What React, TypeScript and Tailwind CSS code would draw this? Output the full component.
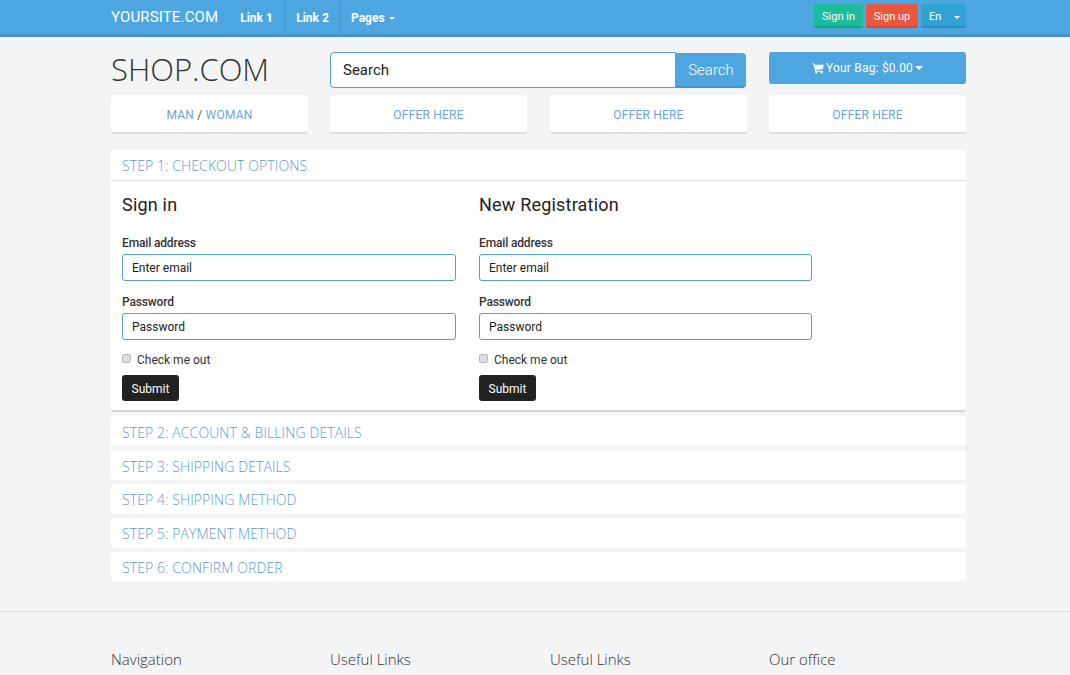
import React from "react";

const roboto = "font-['Roboto','Liberation_Sans',sans-serif]";
const openSans = "font-['Open_Sans','Liberation_Sans',sans-serif]";

function Caret({ className }: { className?: string }) {
  return <span className={`inline-block w-0 h-0 border-x-[3px] border-x-transparent border-t-[3px] border-t-current ${className ?? ""}`} />;
}

function SignForm({ title, className }: { title: string; className: string }) {
  return (
    <div className={`${className} flex flex-col`}>
      <h3 className="text-[18px] leading-[20px] mt-[14px] text-[#222] tracking-[0.2px]">{title}</h3>
      <label className="mt-[20px] text-[12px] leading-[17px] font-medium text-[#333] tracking-[-0.15px]">Email address</label>
      <div className="mt-[2px] h-[27px] border border-[#5a9fc4] rounded-[3px] bg-white px-[9px] text-[12px] leading-[26px] text-[#222]">Enter email</div>
      <label className="mt-[13px] text-[12px] leading-[17px] font-medium text-[#333] tracking-[-0.15px]">Password</label>
      <div className="mt-[2px] h-[27px] border border-[#5a9fc4] rounded-[3px] bg-white px-[9px] text-[12px] leading-[26px] text-[#222]">Password</div>
      <div className="mt-[11px] h-[17px] flex items-center text-[12px] text-[#333]">
        <span className="w-[9px] h-[9px] mb-[2px] bg-[#ddd] border border-[#bbb] rounded-[2px] mr-[6px]" />
        Check me out
      </div>
      <button className="mt-[7px] pt-[1px] self-start w-[57px] h-[26px] bg-[#222] text-white text-[12px] rounded-[3px]">Submit</button>
    </div>
  );
}

const offers = ["OFFER HERE", "OFFER HERE", "OFFER HERE"];
const steps = [
  ["STEP 2: ACCOUNT & BILLING DETAILS", "mt-[4px] h-[30px] leading-[33px]"],
  ["STEP 3: SHIPPING DETAILS", "mt-[4px] h-[30px] leading-[33px]"],
  ["STEP 4: SHIPPING METHOD", "mt-[4px] h-[30px] leading-[31px]"],
  ["STEP 5: PAYMENT METHOD", "mt-[4px] h-[30px] leading-[31px]"],
  ["STEP 6: CONFIRM ORDER", "mt-[4px] h-[29px] leading-[31px]"],
];

export default function App() {
  return (
    <div className={`h-[675px] overflow-hidden bg-[#f3f4f6] ${roboto}`}>
      <header className="h-[37px] bg-[#4ea6e0] border-b-[3px] border-[#4893c5]">
        <div className="w-[855px] ml-[111px] h-[34px] flex items-center">
          <span className="text-[15px] text-white w-[119px] tracking-[0.15px] mt-[1px]">YOURSITE.COM</span>
          <nav className="flex h-full text-[12px] font-bold text-white">
            <a className="w-[56px] pt-[2px] pr-[2px] flex items-center justify-center border-r border-[#4795ca]">Link 1</a>
            <a className="w-[55px] pt-[2px] pr-[1px] flex items-center justify-center border-r border-[#4795ca]">Link 2</a>
            <a className="pl-[10px] pt-[2px] flex items-center gap-[4px]">Pages <Caret /></a>
          </nav>
          <div className="ml-auto flex gap-[3px] text-[11px] text-white self-start mt-[4px]">
            <span className="w-[49px] h-[24px] bg-[#1abc9c] border-b-[2px] border-[#16a085] rounded-[2px] flex items-center justify-center pt-[4px]">Sign in</span>
            <span className="w-[52px] h-[24px] bg-[#e9573f] border-b-[2px] border-[#d14b36] rounded-[2px] flex items-center justify-center pt-[4px]">Sign up</span>
            <span className="w-[45px] h-[24px] bg-[#31a3d3] border-b-[2px] border-[#2a8fba] rounded-[2px] flex items-center pl-[8px] justify-between pr-[6px] pt-[4px]">En <Caret /></span>
          </div>
        </div>
      </header>

      <main className="w-[855px] ml-[111px]">
        <div className="flex mt-[15px]">
          <div className={`${openSans} font-light w-[219px] text-[31px] leading-[34px] text-[#333] h-[36px]`}>SHOP.COM</div>
          <div className="w-[416px] flex h-[36px]">
            <div className="flex-1 border border-[#5a9fc4] rounded-l-[4px] bg-white px-[12px] text-[15px] leading-[34px] text-[#222]">Search</div>
            <button className="w-[70px] h-[35px] mt-[1px] pt-[1px] bg-[#4ea6e0] border-b-[2px] border-[#4893c5] rounded-r-[4px] text-white text-[15px] font-light">Search</button>
          </div>
          <button className="ml-auto w-[197px] h-[32px] bg-[#4ea6e0] rounded-[3px] text-white text-[12px] flex items-center justify-center gap-[2px] tracking-[0.2px]">
            <svg width="12" height="12" viewBox="0 0 13 12" fill="currentColor"><path d="M0 1h2.4l.4 1.4H13l-1.2 4.8-7.6.9.3 1h7.4v1H3.6L1.7 2H0z" /><circle cx="4.6" cy="10.8" r="1.2" /><circle cx="10.6" cy="10.8" r="1.2" /></svg>
            Your Bag: $0.00 <Caret className="border-x-[4.5px] border-t-[4px]" />
          </button>
        </div>

        <div className="grid grid-cols-[219px_220px_219px_197px] mt-[7px] text-[12px] tracking-[0.2px] text-[#6fa3d8]">
          <div className="w-[197px] h-[39px] pt-[2px] bg-white rounded-[3px] border-b-2 border-[#ddd] flex items-center justify-center">
            <span>MAN <span className="text-[#555]">/</span> WOMAN</span>
          </div>
          {offers.map((o, i) => (
            <div key={i} className="w-[197px] h-[39px] pt-[2px] bg-white rounded-[3px] border-b-2 border-[#ddd] flex items-center justify-center">{o}</div>
          ))}
        </div>

        <section className="mt-[16px] h-[262px] bg-white rounded-[3px] border-b-2 border-[#d4d4d4]">
          <div className={`${openSans} font-light h-[31px] border-b border-[#ddd] px-[11px] text-[14px] tracking-[0.1px] leading-[31px] text-[#5c9ad4]`}>STEP 1: CHECKOUT OPTIONS</div>
          <div className="flex pl-[11px] gap-[23px]">
            <SignForm title="Sign in" className="w-[334px]" />
            <SignForm title="New Registration" className="w-[333px]" />
          </div>
        </section>

        {steps.map(([t, c]) => (
          <div key={t} className={`${c} ${openSans} font-light bg-white rounded-[3px] px-[11px] text-[14px] tracking-[0.1px] text-[#5c9ad4]`}>{t}</div>
        ))}
      </main>

      <footer className="mt-[30px] border-t border-[#ddd]">
        <div className={`w-[855px] ml-[111px] mt-[36px] grid grid-cols-[219px_220px_219px_197px] ${openSans} font-light text-[15px] leading-[22px] text-[#333]`}>
          <span>Navigation</span>
          <span>Useful Links</span>
          <span>Useful Links</span>
          <span>Our office</span>
        </div>
      </footer>
    </div>
  );
}
